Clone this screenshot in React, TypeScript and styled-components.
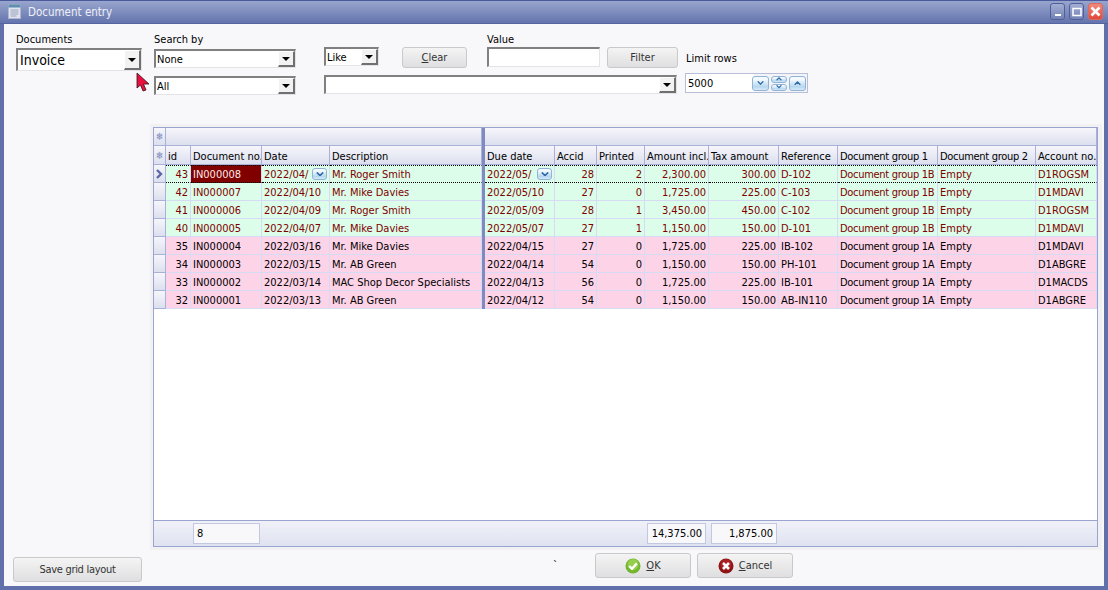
import React from "react";
import styled, { createGlobalStyle } from "styled-components";

const GRID_COLUMNS = "12px 25px 71px 68px 152px 3px 70px 42px 48px 64px 70px 59px 100px 98px 61px";

const GlobalStyle = createGlobalStyle`
  html, body { margin: 0; padding: 0; background: #f8f8fb; }
  * { box-sizing: border-box; }
  body { font-family: "DejaVu Sans Condensed", "Liberation Sans", sans-serif; font-size: 11px; color: #000; }
`;

const Window = styled.div`
  position: relative;
  width: 1108px;
  height: 590px;
  display: flex;
  flex-direction: column;
  background: #6170aa;
  padding: 0 4px 4px;
  border-top: 1px solid #4a5a9c;
  overflow: hidden;
`;

const TitleBar = styled.div`
  height: 23px;
  margin: 0 -4px;
  padding: 0 5px 1px 8px;
  display: flex;
  align-items: center;
  gap: 7px;
  background: linear-gradient(#98a5cd, #6474ad);
  border-bottom: 1px solid #55639f;
`;

const TitleText = styled.span`
  color: #eef0f8;
  font-size: 11.5px;
  flex: 1;
`;

const WinButtons = styled.div`
  display: flex;
  gap: 4px;
`;

const WinButton = styled.button<{ $close?: boolean }>`
  width: 15px;
  height: 17px;
  padding: 0;
  border: 1px solid ${(p) => (p.$close ? "#d86a60" : "#505f9c")};
  border-radius: 3px;
  background: ${(p) =>
    p.$close ? "linear-gradient(#f28a7c, #e0473a)" : "linear-gradient(#a3aed2, #7482b5)"};
  display: flex;
  align-items: center;
  justify-content: center;
`;

const Body = styled.div`
  flex: 1;
  display: flex;
  flex-direction: column;
  background: #f8f8fb;
`;

const Toolbar = styled.div`
  height: 100px;
  margin-left: 12px;
  padding-top: 9px;
  display: grid;
  grid-template-columns: 138px 170px 78px 85px 120px 78px 123px;
  grid-template-rows: 14px 22px 6px 20px;
`;

const Label = styled.label<{ $col: number; $row?: number; $center?: boolean }>`
  grid-column: ${(p) => p.$col};
  grid-row: ${(p) => p.$row ?? 1};
  margin: ${(p) => (p.$center ? "2px 0 0 1px" : "0")};
  align-self: ${(p) => (p.$center ? "center" : "start")};
  line-height: 14px;
  white-space: nowrap;
`;

const Combo = styled.div<{ $col: string; $row: number; $dy?: number; $w?: number; $tall?: boolean }>`
  grid-column: ${(p) => p.$col};
  grid-row: ${(p) => p.$row};
  margin-top: ${(p) => p.$dy ?? 0}px;
  width: ${(p) => p.$w}px;
  height: ${(p) => (p.$tall ? 23 : 19)}px;
  display: flex;
  align-items: center;
  background: #fff;
  border-style: solid;
  border-width: 2px 1px 1px 2px;
  border-color: #808080 #e4e4e8 #e4e4e8 #808080;
  padding-left: ${(p) => (p.$tall ? 2 : 1)}px;
  font-size: ${(p) => (p.$tall ? 14 : 11)}px;
`;

const ComboText = styled.span`
  flex: 1;
  white-space: nowrap;
  overflow: hidden;
`;

const ComboButton = styled.span`
  width: 17px;
  align-self: stretch;
  background: #f2f2f2;
  border-style: solid;
  border-width: 1px 2px 2px 1px;
  border-color: #fff #707070 #707070 #fff;
  display: flex;
  align-items: center;
  justify-content: center;
  &::after {
    content: "";
    border-style: solid;
    border-width: 4px 4px 0;
    border-color: #000 transparent transparent;
  }
`;

const ActionButton = styled.button<{ $w?: number }>`
  width: ${(p) => p.$w ?? 96}px;
  height: 21px;
  padding: 0;
  font: inherit;
  color: #333;
  border: 1px solid #c9c9cc;
  border-radius: 3px;
  background: linear-gradient(#f4f4f4, #dfdfe1);
  display: flex;
  align-items: center;
  justify-content: center;
  gap: 5px;
`;

const ToolbarSlot = styled.div<{ $col: number }>`
  grid-column: ${(p) => p.$col};
  grid-row: 2;
`;

const ValueInput = styled.div`
  width: 113px;
  height: 20px;
  background: #fff;
  border-style: solid;
  border-width: 2px 1px 1px 2px;
  border-color: #808080 #e4e4e8 #e4e4e8 #808080;
`;

const Spinner = styled.div`
  grid-column: 7;
  grid-row: 4;
  width: 123px;
  height: 20px;
  margin-top: -2px;
  display: flex;
  align-items: center;
  gap: 1px;
  padding: 0 1px 0 2px;
  background: #fff;
  border: 1px solid #b7bed8;
  box-shadow: inset -53px 0 0 #f4f4f8;
`;

const SpinnerText = styled.span`
  flex: 1;
`;

const SpinButton = styled.span<{ $w?: number }>`
  width: ${(p) => p.$w ?? 17}px;
  height: 15px;
  border: 1px solid #8fb4d8;
  border-radius: 3px;
  background: linear-gradient(#f3f9fd 20%, #b6d7ef 75%, #d8ebf8);
  display: flex;
  align-items: center;
  justify-content: center;
`;

const SpinPair = styled.span`
  display: flex;
  flex-direction: column;
  gap: 1px;
  width: 16px;
  margin: 0 1px;
`;

const SpinHalf = styled(SpinButton)`
  width: 16px;
  height: 7px;
  border-radius: 3px;
`;

const Cursor = styled.svg`
  position: absolute;
  left: 136px;
  top: 71px;
`;

const GridPanel = styled.div`
  width: 952px;
  height: 426px;
  margin-left: 146px;
  padding: 3px 4px 3px 3px;
  background: #f1f1f4;
`;

const DataGrid = styled.div`
  height: 100%;
  display: flex;
  flex-direction: column;
  background: #fff;
  border: 1px solid #9aa4cf;
`;

const BandRow = styled.div`
  height: 18px;
  display: grid;
  grid-template-columns: 12px 316px 3px 612px;
`;

const HeaderRow = styled.div`
  height: 19px;
  display: grid;
  grid-template-columns: ${GRID_COLUMNS};
`;

const HeadCell = styled.div<{ $tight?: boolean }>`
  display: flex;
  align-items: center;
  padding: 2px 0 0 2px;
  white-space: nowrap;
  overflow: hidden;
  letter-spacing: ${(p) => (p.$tight ? "-0.3px" : "normal")};
  background: linear-gradient(#f6f6fb, #dcdfee);
  border-right: 1px solid #a9b1d8;
  border-bottom: 1px solid #a9b1d8;
`;

const StarCell = styled(HeadCell)`
  justify-content: center;
  padding: 0;
  color: #7c89c0;
  font-size: 10px;
`;

const ThickBar = styled.div`
  background: #7f8bc0;
`;

const Cell = styled.div<{ $num?: boolean; $selected?: boolean; $tight?: boolean }>`
  display: flex;
  align-items: center;
  justify-content: ${(p) => (p.$num ? "flex-end" : "flex-start")};
  padding: ${(p) => (p.$num ? "1px 2px 0 0" : "1px 2px 0 2px")};
  white-space: nowrap;
  overflow: hidden;
  letter-spacing: ${(p) => (p.$tight ? "-0.3px" : "normal")};
  border-right: 1px solid #d6daf2;
  border-bottom: 1px solid #d6daf2;
  ${(p) => (p.$selected ? "background: #800000; color: #fbe9e9;" : "")}
`;

const Row = styled.div<{ $tone: "green" | "pink"; $current?: boolean }>`
  height: 18px;
  display: grid;
  grid-template-columns: ${GRID_COLUMNS};
  background: ${(p) => (p.$tone === "green" ? "#dcfde9" : "#fdd3e8")};
  color: ${(p) => (p.$tone === "green" ? "#800000" : "#000")};
  ${(p) =>
    p.$current
      ? `& > ${Cell} { border-top: 1px dotted #000; border-bottom: 1px dotted #000; padding-top: 0; }`
      : ""}
`;

const Indicator = styled.div`
  background: linear-gradient(#f6f6fb, #dcdfee);
  border-right: 1px solid #a9b1d8;
  border-bottom: 1px solid #a9b1d8;
  display: flex;
  align-items: center;
  justify-content: center;
`;

const CellClip = styled.span`
  flex: 1;
  overflow: hidden;
`;

const EditButton = styled.span`
  width: 15px;
  height: 12px;
  flex: none;
  border: 1px solid #8fb4d8;
  border-radius: 3px;
  background: linear-gradient(#f3f9fd 20%, #b6d7ef 75%, #d8ebf8);
  display: flex;
  align-items: center;
  justify-content: center;
`;

const GridSpace = styled.div`
  flex: 1;
`;

const FooterRow = styled.div`
  height: 26px;
  display: grid;
  grid-template-columns: ${GRID_COLUMNS};
  align-items: center;
  background: linear-gradient(#f0f1f8, #dfe2f0);
  border-top: 1px solid #9aa4cf;
`;

const FooterCell = styled.div<{ $col: number; $num?: boolean; $ml: number; $mr: number }>`
  grid-column: ${(p) => p.$col};
  height: 21px;
  margin: 0 ${(p) => p.$mr}px 0 ${(p) => p.$ml}px;
  padding: 0 3px;
  display: flex;
  align-items: center;
  justify-content: ${(p) => (p.$num ? "flex-end" : "flex-start")};
  background: #f8f8fb;
  border: 1px solid #c3c8e2;
`;

const Actions = styled.div`
  flex: 1;
  display: flex;
  align-items: flex-start;
  padding: 3px 0 0 9px;
`;

const SaveButton = styled(ActionButton)`
  width: 129px;
  height: 25px;
  margin-top: 4px;
  letter-spacing: -0.3px;
`;

const Tick = styled.span`
  width: 42px;
  margin: 6px 0 0 411px;
  line-height: 14px;
`;

const DialogButton = styled(ActionButton)`
  height: 25px;
  margin: 0 6px 0 0;
`;

const Key = styled.span`
  text-decoration: underline;
`;

type Invoice = {
  id: number; no: string; date: string; desc: string; due: string; accid: number;
  printed: number; amount: string; tax: string; ref: string; g1: string; acct: string;
};

const rows: Invoice[] = [
  { id: 43, no: "IN000008", date: "2022/04/", desc: "Mr. Roger Smith", due: "2022/05/", accid: 28, printed: 2, amount: "2,300.00", tax: "300.00", ref: "D-102", g1: "Document group 1B", acct: "D1ROGSM" },
  { id: 42, no: "IN000007", date: "2022/04/10", desc: "Mr. Mike Davies", due: "2022/05/10", accid: 27, printed: 0, amount: "1,725.00", tax: "225.00", ref: "C-103", g1: "Document group 1B", acct: "D1MDAVI" },
  { id: 41, no: "IN000006", date: "2022/04/09", desc: "Mr. Roger Smith", due: "2022/05/09", accid: 28, printed: 1, amount: "3,450.00", tax: "450.00", ref: "C-102", g1: "Document group 1B", acct: "D1ROGSM" },
  { id: 40, no: "IN000005", date: "2022/04/07", desc: "Mr. Mike Davies", due: "2022/05/07", accid: 27, printed: 1, amount: "1,150.00", tax: "150.00", ref: "D-101", g1: "Document group 1B", acct: "D1MDAVI" },
  { id: 35, no: "IN000004", date: "2022/03/16", desc: "Mr. Mike Davies", due: "2022/04/15", accid: 27, printed: 0, amount: "1,725.00", tax: "225.00", ref: "IB-102", g1: "Document group 1A", acct: "D1MDAVI" },
  { id: 34, no: "IN000003", date: "2022/03/15", desc: "Mr. AB Green", due: "2022/04/14", accid: 54, printed: 0, amount: "1,150.00", tax: "150.00", ref: "PH-101", g1: "Document group 1A", acct: "D1ABGRE" },
  { id: 33, no: "IN000002", date: "2022/03/14", desc: "MAC Shop Decor Specialists", due: "2022/04/13", accid: 56, printed: 0, amount: "1,725.00", tax: "225.00", ref: "IB-101", g1: "Document group 1A", acct: "D1MACDS" },
  { id: 32, no: "IN000001", date: "2022/03/13", desc: "Mr. AB Green", due: "2022/04/12", accid: 54, printed: 0, amount: "1,150.00", tax: "150.00", ref: "AB-IN110", g1: "Document group 1A", acct: "D1ABGRE" },
];

const headers = ["id", "Document no.", "Date", "Description"];
const headersRight = ["Due date", "Accid", "Printed", "Amount incl.", "Tax amount", "Reference", "Document group 1", "Document group 2", "Account no."];

const Chevron = ({ up, size = 8, color = "#2f6ca8" }: { up?: boolean; size?: number; color?: string }) => (
  <svg width={size} height={size * 0.6} viewBox="0 0 10 6">
    <path d={up ? "M1 5.5 L5 1.5 L9 5.5" : "M1 .5 L5 4.5 L9 .5"} fill="none" stroke={color} strokeWidth="2" />
  </svg>
);

const DocIcon = () => (
  <svg width="13" height="15" viewBox="0 0 13 15">
    <rect x="0.5" y="0.5" width="12" height="14" fill="#dfe3ee" stroke="#aeb6cf" />
    <rect x="0.5" y="0.5" width="12" height="3" fill="#5f8fb0" />
    <path d="M2.5 6h8M2.5 8h8M2.5 10h8M2.5 12h6" stroke="#9aa3bd" />
  </svg>
);

const OkIcon = () => (
  <svg width="16" height="16" viewBox="0 0 16 16">
    <circle cx="8" cy="8" r="7.5" fill="#72b52e" />
    <circle cx="8" cy="6.5" r="5.5" fill="#93cf4a" />
    <path d="M4.2 8 L7 10.8 L11.8 5.4" fill="none" stroke="#fff" strokeWidth="2.4" />
  </svg>
);

const CancelIcon = () => (
  <svg width="16" height="16" viewBox="0 0 16 16">
    <circle cx="8" cy="8" r="7.5" fill="#8e1515" />
    <circle cx="8" cy="6.5" r="5.5" fill="#a82020" />
    <path d="M5 5 L11 11 M11 5 L5 11" fill="none" stroke="#fff" strokeWidth="2.6" />
  </svg>
);

export default function App() {
  return (
    <>
      <GlobalStyle />
      <Window>
        <TitleBar>
          <DocIcon />
          <TitleText>Document entry</TitleText>
          <WinButtons>
            <WinButton>
              <svg width="8" height="10" viewBox="0 0 8 10"><rect x="1" y="7" width="6" height="2" fill="#fff" /></svg>
            </WinButton>
            <WinButton>
              <svg width="10" height="10" viewBox="0 0 10 10"><rect x="1" y="1.5" width="8" height="7" fill="none" stroke="#fff" strokeWidth="1.5" /></svg>
            </WinButton>
            <WinButton $close>
              <svg width="11" height="11" viewBox="0 0 11 11"><path d="M1.5 1.5 L9.5 9.5 M9.5 1.5 L1.5 9.5" stroke="#fff" strokeWidth="2.6" /></svg>
            </WinButton>
          </WinButtons>
        </TitleBar>
        <Body>
          <Toolbar>
            <Label $col={1}>Documents</Label>
            <Label $col={2}>Search by</Label>
            <Label $col={5}>Value</Label>
            <Label $col={7} $row={2} $center>Limit rows</Label>

            <Combo $col="1" $row={2} $dy={1} $w={126} $tall>
              <ComboText>Invoice</ComboText>
              <ComboButton />
            </Combo>
            <Combo $col="2" $row={2} $dy={2} $w={142}>
              <ComboText>None</ComboText>
              <ComboButton />
            </Combo>
            <Combo $col="3" $row={2} $w={55}>
              <ComboText>Like</ComboText>
              <ComboButton />
            </Combo>
            <ToolbarSlot $col={4}>
              <ActionButton $w={65}><span><Key>C</Key>lear</span></ActionButton>
            </ToolbarSlot>
            <ToolbarSlot $col={5}>
              <ValueInput />
            </ToolbarSlot>
            <ToolbarSlot $col={6}>
              <ActionButton $w={71}>Filter</ActionButton>
            </ToolbarSlot>

            <Combo $col="2" $row={4} $dy={1} $w={142}>
              <ComboText>All</ComboText>
              <ComboButton />
            </Combo>
            <Combo $col="3 / 7" $row={4} $w={353}>
              <ComboText />
              <ComboButton />
            </Combo>
            <Spinner>
              <SpinnerText>5000</SpinnerText>
              <SpinButton><Chevron size={7} /></SpinButton>
              <SpinPair>
                <SpinHalf><Chevron up size={6} /></SpinHalf>
                <SpinHalf><Chevron size={6} /></SpinHalf>
              </SpinPair>
              <SpinButton><Chevron up size={7} /></SpinButton>
            </Spinner>
          </Toolbar>

          <GridPanel>
            <DataGrid>
              <BandRow>
                <StarCell>❄</StarCell>
                <HeadCell />
                <ThickBar />
                <HeadCell />
              </BandRow>
              <HeaderRow>
                <StarCell>❄</StarCell>
                {headers.map((h) => <HeadCell key={h}>{h}</HeadCell>)}
                <ThickBar />
                {headersRight.map((h) => (
                  <HeadCell key={h} $tight={h.startsWith("Document group")}>{h}</HeadCell>
                ))}
              </HeaderRow>
              {rows.map((r, i) => {
                const current = i === 0;
                return (
                  <Row key={r.id} $tone={i < 4 ? "green" : "pink"} $current={current}>
                    <Indicator>
                      {current && (
                        <svg width="7" height="10" viewBox="0 0 7 10">
                          <path d="M1 1 L5 5 L1 9" fill="none" stroke="#5a68a8" strokeWidth="2.4" />
                        </svg>
                      )}
                    </Indicator>
                    <Cell $num>{r.id}</Cell>
                    <Cell $selected={current}>{r.no}</Cell>
                    <Cell>
                      <CellClip>{r.date}</CellClip>
                      {current && <EditButton><Chevron size={8} /></EditButton>}
                    </Cell>
                    <Cell>{r.desc}</Cell>
                    <ThickBar />
                    <Cell>
                      <CellClip>{r.due}</CellClip>
                      {current && <EditButton><Chevron size={8} /></EditButton>}
                    </Cell>
                    <Cell $num>{r.accid}</Cell>
                    <Cell $num>{r.printed}</Cell>
                    <Cell $num>{r.amount}</Cell>
                    <Cell $num>{r.tax}</Cell>
                    <Cell>{r.ref}</Cell>
                    <Cell $tight>{r.g1}</Cell>
                    <Cell>Empty</Cell>
                    <Cell>{r.acct}</Cell>
                  </Row>
                );
              })}
              <GridSpace />
              <FooterRow>
                <FooterCell $col={3} $ml={2} $mr={2}>8</FooterCell>
                <FooterCell $col={10} $num $ml={2} $mr={3}>14,375.00</FooterCell>
                <FooterCell $col={11} $num $ml={2} $mr={2}>1,875.00</FooterCell>
              </FooterRow>
            </DataGrid>
          </GridPanel>

          <Actions>
            <SaveButton>Save grid layout</SaveButton>
            <Tick>`</Tick>
            <DialogButton><OkIcon /><span><Key>O</Key>K</span></DialogButton>
            <DialogButton><CancelIcon /><span><Key>C</Key>ancel</span></DialogButton>
          </Actions>
        </Body>
        <Cursor width="14" height="20" viewBox="0 0 14 20">
          <path d="M1 1 L1 16 L4.5 13 L7 19 L10 18 L7.5 12 L13 12 Z" fill="#e8103f" stroke="#30101a" strokeWidth="0.8" />
        </Cursor>
      </Window>
    </>
  );
}
